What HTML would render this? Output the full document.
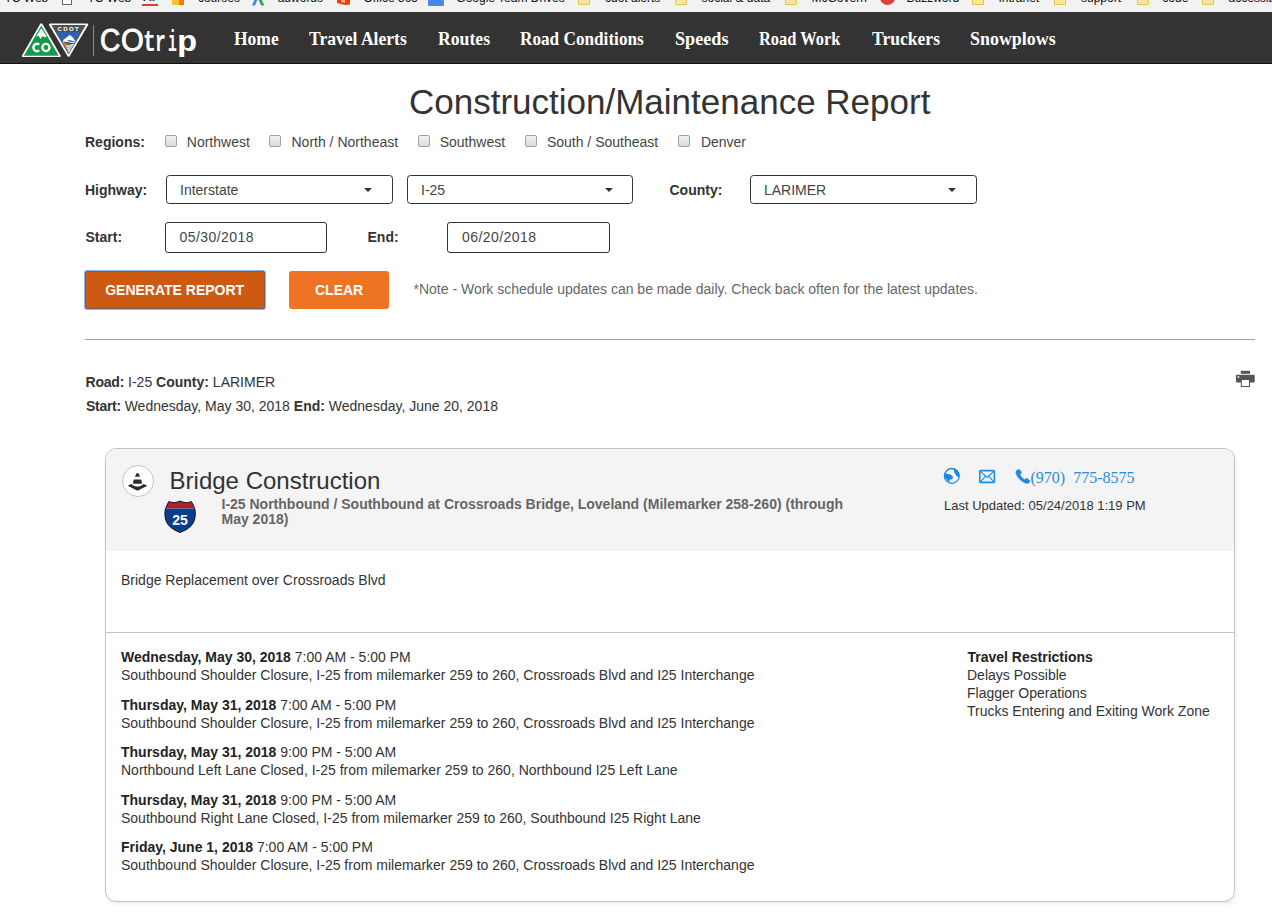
<!DOCTYPE html>
<html><head><meta charset="utf-8"><style>
html,body{margin:0;padding:0;background:#fff;width:1272px;height:924px;overflow:hidden;position:relative}
.t{position:absolute;white-space:pre;margin:0;padding:0}
</style></head><body>
<div class="t" style="left:0px;top:0px;width:1272px;height:12px;background:#f2f2f2"></div>
<div class="t" style="left:0px;top:12px;width:1272px;height:51px;background:#333"></div>
<div class="t" style="left:0px;top:63px;width:1272px;height:1px;background:#111"></div>
<div class="t" style="left:234.0px;top:26.59px;font:700 19px/24px 'Liberation Serif', serif;color:#fff;transform:scaleX(0.92);transform-origin:0 0">Home</div>
<div class="t" style="left:309.3px;top:26.59px;font:700 19px/24px 'Liberation Serif', serif;color:#fff;transform:scaleX(0.925);transform-origin:0 0">Travel Alerts</div>
<div class="t" style="left:437.5px;top:26.59px;font:700 19px/24px 'Liberation Serif', serif;color:#fff;transform:scaleX(0.93);transform-origin:0 0">Routes</div>
<div class="t" style="left:520.1px;top:26.59px;font:700 19px/24px 'Liberation Serif', serif;color:#fff;transform:scaleX(0.905);transform-origin:0 0">Road Conditions</div>
<div class="t" style="left:674.8px;top:26.59px;font:700 19px/24px 'Liberation Serif', serif;color:#fff;transform:scaleX(0.957);transform-origin:0 0">Speeds</div>
<div class="t" style="left:759.1px;top:26.59px;font:700 19px/24px 'Liberation Serif', serif;color:#fff;transform:scaleX(0.865);transform-origin:0 0">Road Work</div>
<div class="t" style="left:871.5px;top:26.59px;font:700 19px/24px 'Liberation Serif', serif;color:#fff;transform:scaleX(0.925);transform-origin:0 0">Truckers</div>
<div class="t" style="left:969.5px;top:26.59px;font:700 19px/24px 'Liberation Serif', serif;color:#fff;transform:scaleX(0.944);transform-origin:0 0">Snowplows</div>
<div class="t" style="left:100px;top:0;height:64px;color:#fff">
<span class="t" style="left:0px;top:20px;font:400 30.5px/40px 'Liberation Sans', sans-serif;-webkit-text-stroke:0.9px #fff;transform:scaleX(.92);transform-origin:0 0">C</span>
<span class="t" style="left:21px;top:20px;font:400 30.5px/40px 'Liberation Sans', sans-serif;-webkit-text-stroke:0.9px #fff;transform:scaleX(.96);transform-origin:0 0">O</span>
<span class="t" style="left:43px;top:23px;font:700 29.5px/40px 'Liberation Mono', monospace;transform:scaleX(.73);transform-origin:0 0">t</span>
<span class="t" style="left:54.5px;top:23px;font:700 29.5px/40px 'Liberation Mono', monospace;transform:scaleX(.61);transform-origin:0 0">r</span>
<span class="t" style="left:68px;top:23px;font:700 29.5px/40px 'Liberation Mono', monospace;transform:scaleX(.5);transform-origin:0 0">i</span>
<span class="t" style="left:76.5px;top:23px;font:700 29.5px/40px 'Liberation Mono', monospace;transform:scaleX(1.15);transform-origin:0 0">p</span>
</div>
<div class="t" style="left:93px;top:25px;width:1px;height:31px;background:#8a8a8a"></div>
<div class="t" style="left:409px;top:79.87px;font:400 35px/44px 'Liberation Sans', sans-serif;color:#333;">Construction/Maintenance Report</div>
<div class="t" style="left:85px;top:133.15px;font:700 14px/18px 'Liberation Sans', sans-serif;color:#333;">Regions:</div>
<div class="t" style="left:165px;top:135px;width:10px;height:10px;border:1px solid #a0a0a0;border-radius:2px;background:linear-gradient(#f2f2f2,#dcdcdc)"></div>
<div class="t" style="left:186.8px;top:133.15px;font:400 14px/18px 'Liberation Sans', sans-serif;color:#444;">Northwest</div>
<div class="t" style="left:269px;top:135px;width:10px;height:10px;border:1px solid #a0a0a0;border-radius:2px;background:linear-gradient(#f2f2f2,#dcdcdc)"></div>
<div class="t" style="left:291.5px;top:133.15px;font:400 14px/18px 'Liberation Sans', sans-serif;color:#444;">North / Northeast</div>
<div class="t" style="left:418px;top:135px;width:10px;height:10px;border:1px solid #a0a0a0;border-radius:2px;background:linear-gradient(#f2f2f2,#dcdcdc)"></div>
<div class="t" style="left:439.7px;top:133.15px;font:400 14px/18px 'Liberation Sans', sans-serif;color:#444;">Southwest</div>
<div class="t" style="left:525px;top:135px;width:10px;height:10px;border:1px solid #a0a0a0;border-radius:2px;background:linear-gradient(#f2f2f2,#dcdcdc)"></div>
<div class="t" style="left:546.9px;top:133.15px;font:400 14px/18px 'Liberation Sans', sans-serif;color:#444;">South / Southeast</div>
<div class="t" style="left:678px;top:135px;width:10px;height:10px;border:1px solid #a0a0a0;border-radius:2px;background:linear-gradient(#f2f2f2,#dcdcdc)"></div>
<div class="t" style="left:700.9px;top:133.15px;font:400 14px/18px 'Liberation Sans', sans-serif;color:#444;">Denver</div>
<div class="t" style="left:85px;top:180.65px;font:700 14px/18px 'Liberation Sans', sans-serif;color:#333;">Highway:</div>
<div class="t" style="left:166px;top:175px;width:225px;height:27px;border:1px solid #333;border-radius:3.5px;background:#fff"></div>
<div class="t" style="left:180px;top:180.65px;font:400 14px/18px 'Liberation Sans', sans-serif;color:#444;">Interstate</div>
<div class="t" style="left:364px;top:188px;width:0px;height:0px;border-left:4.5px solid transparent;border-right:4.5px solid transparent;border-top:4px solid #333"></div>
<div class="t" style="left:407px;top:175px;width:224px;height:27px;border:1px solid #333;border-radius:3.5px;background:#fff"></div>
<div class="t" style="left:421px;top:180.65px;font:400 14px/18px 'Liberation Sans', sans-serif;color:#444;">I-25</div>
<div class="t" style="left:605px;top:188px;width:0px;height:0px;border-left:4.5px solid transparent;border-right:4.5px solid transparent;border-top:4px solid #333"></div>
<div class="t" style="left:750px;top:175px;width:225px;height:27px;border:1px solid #333;border-radius:3.5px;background:#fff"></div>
<div class="t" style="left:764px;top:180.65px;font:400 14px/18px 'Liberation Sans', sans-serif;color:#444;">LARIMER</div>
<div class="t" style="left:947.5px;top:188px;width:0px;height:0px;border-left:4.5px solid transparent;border-right:4.5px solid transparent;border-top:4px solid #333"></div>
<div class="t" style="left:669.5px;top:180.65px;font:700 14px/18px 'Liberation Sans', sans-serif;color:#333;">County:</div>
<div class="t" style="left:85.5px;top:228.15px;font:700 14px/18px 'Liberation Sans', sans-serif;color:#333;">Start:</div>
<div class="t" style="left:165px;top:222px;width:160px;height:29px;border:1px solid #333;border-radius:3px;background:#fff"></div>
<div class="t" style="left:179.5px;top:228.15px;font:400 14px/18px 'Liberation Sans', sans-serif;color:#444;letter-spacing:0.45px">05/30/2018</div>
<div class="t" style="left:367.5px;top:228.15px;font:700 14px/18px 'Liberation Sans', sans-serif;color:#333;">End:</div>
<div class="t" style="left:447px;top:222px;width:161px;height:29px;border:1px solid #333;border-radius:3px;background:#fff"></div>
<div class="t" style="left:462px;top:228.15px;font:400 14px/18px 'Liberation Sans', sans-serif;color:#444;letter-spacing:0.45px">06/20/2018</div>
<div class="t" style="left:84px;top:270px;width:180px;height:38px;background:#cc5a13;border:1px solid #8ab4f8;box-shadow:inset 0 0 0 1px #7d5d55;border-radius:3px"></div>
<div class="t" style="left:105.2px;top:281.35px;font:700 14px/18px 'Liberation Sans', sans-serif;color:#fff;">GENERATE REPORT</div>
<div class="t" style="left:289px;top:271px;width:100px;height:38px;background:#ee7323;border-radius:3px"></div>
<div class="t" style="left:315px;top:281.35px;font:700 14px/18px 'Liberation Sans', sans-serif;color:#fff;">CLEAR</div>
<div class="t" style="left:413.5px;top:280.15px;font:400 14px/18px 'Liberation Sans', sans-serif;color:#666;">*Note - Work schedule updates can be made daily. Check back often for the latest updates.</div>
<div class="t" style="left:85px;top:339px;width:1170px;height:1px;background:#a0a0a0"></div>
<div class="t" style="left:85.5px;top:373.15px;font:400 14px/18px 'Liberation Sans', sans-serif;color:#333;"><b style="letter-spacing:-0.2px">Road:</b> I-25 <b>County:</b> LARIMER</div>
<div class="t" style="left:86px;top:397.15px;font:400 14px/18px 'Liberation Sans', sans-serif;color:#333;"><b style="letter-spacing:-0.3px">Start:</b> Wednesday, May 30, 2018 <b>End:</b> Wednesday, June 20, 2018</div>
<div class="t" style="left:105px;top:448px;width:1128px;height:452px;border:1px solid #c4c4c4;border-radius:11px;background:#fff;box-shadow:1px 2px 4px rgba(0,0,0,0.08);overflow:hidden"></div>
<div class="t" style="left:106px;top:449px;width:1128px;height:102px;background:#f4f4f4;border-radius:10px 10px 0 0"></div>
<div class="t" style="left:106px;top:632px;width:1128px;height:1px;background:#c4c4c4"></div>
<div class="t" style="left:122px;top:465px;width:30px;height:30px;border:1px solid #c2c2c2;border-radius:50%;background:#fff"></div>
<div class="t" style="left:169.6px;top:466.08px;font:400 24px/30px 'Liberation Sans', sans-serif;color:#333;">Bridge Construction</div>
<div class="t" style="left:221.5px;top:496.95px;font:700 14px/15px 'Liberation Sans', sans-serif;color:#666;">I-25 Northbound / Southbound at Crossroads Bridge, Loveland (Milemarker 258-260) (through
May 2018)</div>
<div class="t" style="left:944px;top:498.10px;font:400 13px/16px 'Liberation Sans', sans-serif;color:#333;">Last Updated: 05/24/2018 1:19 PM</div>
<div class="t" style="left:1030.5px;top:468.00px;font:400 16px/20px 'Liberation Serif', serif;color:#2a8bd8;">(970)&nbsp; 775-8575</div>
<div class="t" style="left:121px;top:570.75px;font:400 14px/18px 'Liberation Sans', sans-serif;color:#333;">Bridge Replacement over Crossroads Blvd</div>
<div class="t" style="left:121px;top:648.25px;font:400 14px/18px 'Liberation Sans', sans-serif;color:#333;"><b style="color:#222">Wednesday, May 30, 2018</b> 7:00 AM - 5:00 PM</div>
<div class="t" style="left:121px;top:666.05px;font:400 14px/18px 'Liberation Sans', sans-serif;color:#333;">Southbound Shoulder Closure, I-25 from milemarker 259 to 260, Crossroads Blvd and I25 Interchange</div>
<div class="t" style="left:121px;top:696.25px;font:400 14px/18px 'Liberation Sans', sans-serif;color:#333;"><b style="color:#222">Thursday, May 31, 2018</b> 7:00 AM - 5:00 PM</div>
<div class="t" style="left:121px;top:714.05px;font:400 14px/18px 'Liberation Sans', sans-serif;color:#333;">Southbound Shoulder Closure, I-25 from milemarker 259 to 260, Crossroads Blvd and I25 Interchange</div>
<div class="t" style="left:121px;top:743.05px;font:400 14px/18px 'Liberation Sans', sans-serif;color:#333;"><b style="color:#222">Thursday, May 31, 2018</b> 9:00 PM - 5:00 AM</div>
<div class="t" style="left:121px;top:760.85px;font:400 14px/18px 'Liberation Sans', sans-serif;color:#333;">Northbound Left Lane Closed, I-25 from milemarker 259 to 260, Northbound I25 Left Lane</div>
<div class="t" style="left:121px;top:791.15px;font:400 14px/18px 'Liberation Sans', sans-serif;color:#333;"><b style="color:#222">Thursday, May 31, 2018</b> 9:00 PM - 5:00 AM</div>
<div class="t" style="left:121px;top:808.95px;font:400 14px/18px 'Liberation Sans', sans-serif;color:#333;">Southbound Right Lane Closed, I-25 from milemarker 259 to 260, Southbound I25 Right Lane</div>
<div class="t" style="left:121px;top:837.85px;font:400 14px/18px 'Liberation Sans', sans-serif;color:#333;"><b style="color:#222">Friday, June 1, 2018</b> 7:00 AM - 5:00 PM</div>
<div class="t" style="left:121px;top:855.65px;font:400 14px/18px 'Liberation Sans', sans-serif;color:#333;">Southbound Shoulder Closure, I-25 from milemarker 259 to 260, Crossroads Blvd and I25 Interchange</div>
<div class="t" style="left:967.5px;top:648.25px;font:700 14px/18px 'Liberation Sans', sans-serif;color:#222;">Travel Restrictions</div>
<div class="t" style="left:967px;top:666.35px;font:400 14px/18px 'Liberation Sans', sans-serif;color:#333;">Delays Possible</div>
<div class="t" style="left:967px;top:684.15px;font:400 14px/18px 'Liberation Sans', sans-serif;color:#333;">Flagger Operations</div>
<div class="t" style="left:967px;top:702.15px;font:400 14px/18px 'Liberation Sans', sans-serif;color:#333;">Trucks Entering and Exiting Work Zone</div>
<svg class="t" style="left:0px;top:0px" width="100" height="64" viewBox="0 0 100 64">
<path d="M41.3 23.2 Q42 23.2 42.6 24.2 L60.6 55.4 Q61.2 57 59.6 57 L23 57 Q21.4 57 22 55.4 L40 24.2 Q40.6 23.2 41.3 23.2 Z" fill="#fff"/>
<path d="M41.3 25.6 L58.7 55.8 L23.9 55.8 Z" fill="#149a4a"/>
<path d="M41.3 28.2 L46.8 36.6 L44.4 37.3 L42.6 36 L40.3 38.9 L38.8 35.7 L36.2 36.6 Z" fill="#fff"/>
<path d="M39.2 44.6 A3.6 3.6 0 1 0 39.2 50.4" fill="none" stroke="#fff" stroke-width="2.3"/>
<circle cx="45.9" cy="47.5" r="3.6" fill="none" stroke="#fff" stroke-width="2.3"/>
<path d="M50 23.6 L87.2 23.6 Q88.8 23.8 88 25.2 L69.6 56.2 Q68.6 57.4 67.6 56.2 L49.2 25.2 Q48.4 23.8 50 23.6 Z" fill="#fff"/>
<path d="M51.3 25 L85.9 25 L68.6 54.6 Z" fill="#4b5256"/>
<path d="M56.8 32.2 L80.4 32.2 L74.6 42.4 L62.8 42.4 Z" fill="#2f62b6"/>
<path d="M62.6 40.6 L69.8 35 L72.6 37.2 L75.8 41.8 L71.6 40.6 L68.8 40 L66.2 41.6 Z" fill="#fff"/>
<path d="M62.4 42.2 Q66.5 40.8 70.5 42.2 L74.6 42.4" fill="none" stroke="#dde6f3" stroke-width="1.1"/>
<path d="M62.6 43 L67.8 43.6 L66.6 45.8 L63.9 45.8 Z" fill="#e8701f"/>
<path d="M65.2 45.8 L74.4 43.4 L68.8 53 Z" fill="#dcdcdc"/>
<path d="M66.4 47.6 L72.6 46.4 M67.2 49.6 L71.6 48.6" stroke="#8a9096" stroke-width="0.6"/>
<text x="68.8" y="30.6" text-anchor="middle" font-family="Liberation Sans" font-weight="700" font-size="6" letter-spacing="1.4" fill="#fff">CDOT</text>
</svg>
<svg class="t" style="left:120px;top:463px" width="36" height="36" viewBox="0 0 36 36">
<path d="M15 13.7 L16.3 10.6 Q17.5 9.2 18.7 10.6 L20 13.7 Z" fill="#2b2b2b"/>
<path d="M13.8 16.4 L21.2 16.4 L22.2 20.4 Q17.5 21.2 12.8 20.4 Z" fill="#2b2b2b"/>
<path d="M11.2 21.1 Q17.5 26.5 23.8 21.1 L26.9 22.6 Q27 23 26.4 23.3 L18 27.6 Q17.5 27.9 17 27.6 L8.6 23.3 Q8 23 8.1 22.6 Z" fill="#2b2b2b"/>
</svg>
<svg class="t" style="left:160px;top:497px" width="40" height="40" viewBox="0 0 40 40"><g transform="translate(20.15 19.9) scale(0.95 0.975) translate(-20 -20)">
<path d="M8.2 4.1 Q11 5.7 14.3 5.3 Q17.4 4.9 19.9 3.8 Q22.5 4.9 25.6 5.3 Q28.9 5.7 31.7 4.1 Q34.4 8 35.6 12.5 Q36.6 18 35.1 23.2 Q32.4 31.8 19.9 36 Q7.6 31.8 4.8 23.2 Q3.3 18 4.3 12.5 Q5.6 8 8.2 4.1 Z" fill="#0a3d8c" stroke="#111" stroke-width="1"/>
<path d="M8.6 4.8 Q11 6.2 14.3 5.8 Q17.4 5.4 19.9 4.4 Q22.5 5.4 25.6 5.8 Q28.9 6.2 31.3 4.8 Q33.6 8.2 34.6 11.4 L5.3 11.4 Q6.3 8.2 8.6 4.8 Z" fill="#b11e2d"/>
<rect x="5.1" y="11.2" width="29.7" height="0.7" fill="#8090b8"/>
<text x="19.8" y="28.3" text-anchor="middle" font-family="Liberation Sans" font-weight="700" font-size="14.8" fill="#fff">25</text></g>
</svg>
<svg class="t" style="left:942px;top:467px" width="20" height="19" viewBox="0 0 20 19">
<circle cx="9.8" cy="8.9" r="7.4" fill="none" stroke="#1a8ae6" stroke-width="1.3"/>
<path d="M2.5 6.6 Q5 6.6 7.7 7.3 Q10.4 8.4 11.1 10 Q10.6 11.8 9.9 12.2 Q8 12.2 7.7 12.9 Q7.6 14.6 7.3 15.2 Q5.8 14.2 5.1 12.9 Q4 12 3.2 10.7 Q2.2 8.6 2.5 6.6 Z" fill="#1a8ae6"/>
<path d="M11.8 2.1 Q14.2 2.6 15.6 3.6 Q17 5.4 17.4 7.7 Q17.4 9.2 17 10 Q15.6 9.8 14.8 9.2 Q13.6 8 12.9 6.6 Q12.2 5.6 12.2 4.7 Q11.6 3.2 11.8 2.1 Z" fill="#1a8ae6"/>
</svg>
<svg class="t" style="left:978px;top:469px" width="18" height="15" viewBox="0 0 18 15">
<rect x="1.8" y="1.6" width="14.6" height="11.8" rx="0.8" fill="none" stroke="#1a8ae6" stroke-width="1.6"/>
<path d="M2.4 2.4 L9.1 8.4 L15.8 2.4 M2.4 12.8 L7.4 7.4 M15.8 12.8 L10.8 7.4" fill="none" stroke="#1a8ae6" stroke-width="1.1"/>
</svg>
<svg class="t" style="left:1014px;top:468px" width="18" height="17" viewBox="0 0 18 17">
<path d="M3.8 1.4 Q4.8 0.8 5.6 1.6 L7.4 3.6 Q8 4.4 7.4 5.2 L6.2 6.4 Q7.4 9.6 10.6 11.6 L11.8 10.4 Q12.6 9.8 13.4 10.4 L15.6 12.2 Q16.4 13 15.8 14 L14.6 15.2 Q13.2 16.2 10.6 15 Q4.4 11.8 1.8 5.4 Q1.2 3.6 2.4 2.6 Z" fill="#1a8ae6"/>
</svg>
<svg class="t" style="left:1234px;top:369px" width="22" height="20" viewBox="0 0 22 20">
<rect x="6.8" y="1.8" width="9.2" height="3" fill="#555"/>
<rect x="2" y="5.8" width="18.7" height="7.8" rx="0.8" fill="#555"/>
<rect x="3.6" y="7.2" width="1.6" height="1.6" fill="#fff"/>
<rect x="6.8" y="10" width="9.2" height="8" fill="#555"/>
<rect x="7.8" y="11" width="7.2" height="6" fill="#fff"/>
</svg>
<div class="t" style="left:4.5px;top:-9.06px;font:400 12px/15px 'Liberation Sans', sans-serif;color:#111;">TC Web</div>
<div class="t" style="left:87.5px;top:-9.06px;font:400 12px/15px 'Liberation Sans', sans-serif;color:#111;">TC Web</div>
<div class="t" style="left:197.9px;top:-9.06px;font:400 12px/15px 'Liberation Sans', sans-serif;color:#111;">courses</div>
<div class="t" style="left:277.7px;top:-9.06px;font:400 12px/15px 'Liberation Sans', sans-serif;color:#111;">adwords</div>
<div class="t" style="left:363.5px;top:-9.06px;font:400 12px/15px 'Liberation Sans', sans-serif;color:#111;">Office 365</div>
<div class="t" style="left:456.3px;top:-9.06px;font:400 12px/15px 'Liberation Sans', sans-serif;color:#111;">Google Team Drives</div>
<div class="t" style="left:605.0px;top:-9.06px;font:400 12px/15px 'Liberation Sans', sans-serif;color:#111;">cdot alerts</div>
<div class="t" style="left:701.5px;top:-9.06px;font:400 12px/15px 'Liberation Sans', sans-serif;color:#111;">social &amp; data</div>
<div class="t" style="left:811.5px;top:-9.06px;font:400 12px/15px 'Liberation Sans', sans-serif;color:#111;">McGovern</div>
<div class="t" style="left:906.5px;top:-9.06px;font:400 12px/15px 'Liberation Sans', sans-serif;color:#111;">Buzzword</div>
<div class="t" style="left:998.5px;top:-9.06px;font:400 12px/15px 'Liberation Sans', sans-serif;color:#111;">Intranet</div>
<div class="t" style="left:1081.0px;top:-9.06px;font:400 12px/15px 'Liberation Sans', sans-serif;color:#111;">support</div>
<div class="t" style="left:1162.3px;top:-9.06px;font:400 12px/15px 'Liberation Sans', sans-serif;color:#111;">code</div>
<div class="t" style="left:1228.5px;top:-9.06px;font:400 12px/15px 'Liberation Sans', sans-serif;color:#111;">accessibility</div>
<div class="t" style="left:62px;top:-7px;width:8px;height:10px;border:1px solid #666;background:#fff"></div>
<div class="t" style="left:142px;top:4px;width:16px;height:1.5px;background:#e53935"></div>
<div class="t" style="left:143px;top:-10.16px;font:700 12px/15px 'Liberation Sans', sans-serif;color:#333;">AI</div>
<div class="t" style="left:172px;top:-6px;width:12px;height:10.5px;background:linear-gradient(90deg,#fbc02d 0,#fbc02d 60%,#f57c00 60%)"></div>
<div class="t" style="left:578.2px;top:-5px;width:10px;height:7.8px;background:#fde59c;border:1px solid #e6c05a;border-radius:1px"></div>
<div class="t" style="left:675.2px;top:-5px;width:10px;height:7.8px;background:#fde59c;border:1px solid #e6c05a;border-radius:1px"></div>
<div class="t" style="left:785.2px;top:-5px;width:10px;height:7.8px;background:#fde59c;border:1px solid #e6c05a;border-radius:1px"></div>
<div class="t" style="left:972.0px;top:-5px;width:10px;height:7.8px;background:#fde59c;border:1px solid #e6c05a;border-radius:1px"></div>
<div class="t" style="left:1054.2px;top:-5px;width:10px;height:7.8px;background:#fde59c;border:1px solid #e6c05a;border-radius:1px"></div>
<div class="t" style="left:1137.0px;top:-5px;width:10px;height:7.8px;background:#fde59c;border:1px solid #e6c05a;border-radius:1px"></div>
<div class="t" style="left:1202.0px;top:-5px;width:10px;height:7.8px;background:#fde59c;border:1px solid #e6c05a;border-radius:1px"></div>
<svg class="t" style="left:250px;top:-6px" width="16" height="12" viewBox="0 0 16 12"><path d="M2 11.5 L7 0 L10 0 L5 11.5 Z" fill="#4285f4"/><path d="M9 0 L14.5 11.5 L11 11.5 L6 0 Z" fill="#34a853"/></svg>
<svg class="t" style="left:336px;top:-6px" width="15" height="11" viewBox="0 0 15 11"><path d="M1 2 L9 0 L14 1.5 L14 10.5 L9 11 L1 9 Z" fill="#eb3c00"/><path d="M5 3 L9 2 L9 9 L5 8 Z" fill="#ffb08a"/></svg>
<div class="t" style="left:428px;top:-6px;width:15.5px;height:11.5px;background:#4a86e8;border-radius:1.5px"></div>
<div class="t" style="left:880px;top:-10px;width:15px;height:15px;border-radius:50%;background:#dc4437"></div>
</body></html>
